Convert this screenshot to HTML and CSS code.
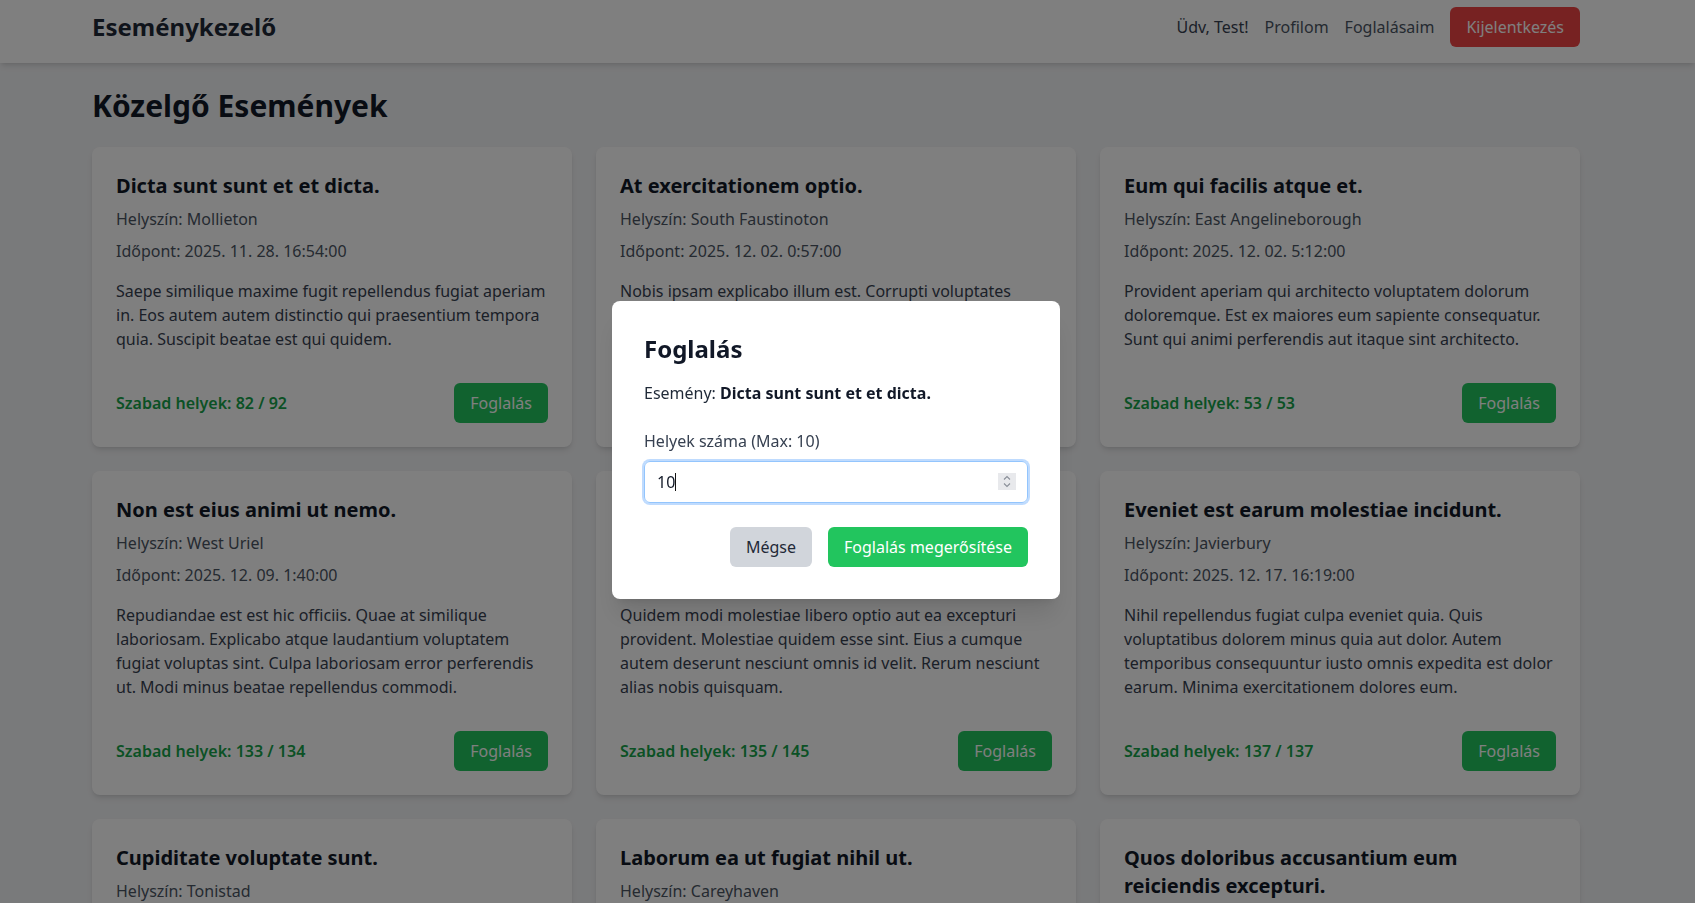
FILE: index.html
```html
<!DOCTYPE html>
<html lang="hu">
<head>
<meta charset="utf-8">
<title>Eseménykezelő</title>
<link rel="stylesheet" href="styles.css">
</head>
<body>
<header class="site-header">
  <div class="container nav">
    <div class="brand">Eseménykezelő</div>
    <nav class="nav-links">
      <span class="greet">Üdv, Test!</span>
      <a class="nav-link" href="#">Profilom</a>
      <a class="nav-link" href="#">Foglalásaim</a>
      <button class="btn btn-red">Kijelentkezés</button>
    </nav>
  </div>
</header>

<main class="container main">
  <h1 class="page-title">Közelgő Események</h1>
  <div class="grid">
    <article class="card">
      <h2 class="card-title">Dicta sunt sunt et et dicta.</h2>
      <p class="meta">Helyszín: Mollieton</p>
      <p class="meta">Időpont: 2025. 11. 28. 16:54:00</p>
      <p class="desc">Saepe similique maxime fugit repellendus fugiat aperiam in. Eos autem autem distinctio qui praesentium tempora quia. Suscipit beatae est qui quidem.</p>
      <div class="card-foot"><span class="seats">Szabad helyek: 82 / 92</span><button class="btn btn-green">Foglalás</button></div>
    </article>
    <article class="card">
      <h2 class="card-title">At exercitationem optio.</h2>
      <p class="meta">Helyszín: South Faustinoton</p>
      <p class="meta">Időpont: 2025. 12. 02. 0:57:00</p>
      <p class="desc">Nobis ipsam explicabo illum est. Corrupti voluptates dolorem quia aut. Et qui sed aliquam voluptas nihil. Ut quam ut ea ipsam.</p>
      <div class="card-foot"><span class="seats">Szabad helyek: 64 / 80</span><button class="btn btn-green">Foglalás</button></div>
    </article>
    <article class="card">
      <h2 class="card-title">Eum qui facilis atque et.</h2>
      <p class="meta">Helyszín: East Angelineborough</p>
      <p class="meta">Időpont: 2025. 12. 02. 5:12:00</p>
      <p class="desc">Provident aperiam qui architecto voluptatem dolorum doloremque. Est ex maiores eum sapiente consequatur. Sunt qui animi perferendis aut itaque sint architecto.</p>
      <div class="card-foot"><span class="seats">Szabad helyek: 53 / 53</span><button class="btn btn-green">Foglalás</button></div>
    </article>

    <article class="card">
      <h2 class="card-title">Non est eius animi ut nemo.</h2>
      <p class="meta">Helyszín: West Uriel</p>
      <p class="meta">Időpont: 2025. 12. 09. 1:40:00</p>
      <p class="desc">Repudiandae est est hic officiis. Quae at similique laboriosam. Explicabo atque laudantium voluptatem fugiat voluptas sint. Culpa laboriosam error perferendis ut. Modi minus beatae repellendus commodi.</p>
      <div class="card-foot"><span class="seats">Szabad helyek: 133 / 134</span><button class="btn btn-green">Foglalás</button></div>
    </article>
    <article class="card">
      <h2 class="card-title">Quia rerum voluptas et.</h2>
      <p class="meta">Helyszín: Lake Kaleyfort</p>
      <p class="meta">Időpont: 2025. 12. 12. 9:25:00</p>
      <p class="desc">Quidem modi molestiae libero optio aut ea excepturi provident. Molestiae quidem esse sint. Eius a cumque autem deserunt nesciunt omnis id velit. Rerum nesciunt alias nobis quisquam.</p>
      <div class="card-foot"><span class="seats">Szabad helyek: 135 / 145</span><button class="btn btn-green">Foglalás</button></div>
    </article>
    <article class="card">
      <h2 class="card-title">Eveniet est earum molestiae incidunt.</h2>
      <p class="meta">Helyszín: Javierbury</p>
      <p class="meta">Időpont: 2025. 12. 17. 16:19:00</p>
      <p class="desc">Nihil repellendus fugiat culpa eveniet quia. Quis voluptatibus dolorem minus quia aut dolor. Autem temporibus consequuntur iusto omnis expedita est dolor earum. Minima exercitationem dolores eum.</p>
      <div class="card-foot"><span class="seats">Szabad helyek: 137 / 137</span><button class="btn btn-green">Foglalás</button></div>
    </article>

    <article class="card">
      <h2 class="card-title">Cupiditate voluptate sunt.</h2>
      <p class="meta">Helyszín: Tonistad</p>
      <p class="meta">Időpont: 2025. 12. 20. 11:05:00</p>
      <p class="desc">Voluptas omnis est quia ut. Dolores dolorem ut illum voluptatem.</p>
      <div class="card-foot"><span class="seats">Szabad helyek: 40 / 50</span><button class="btn btn-green">Foglalás</button></div>
    </article>
    <article class="card">
      <h2 class="card-title">Laborum ea ut fugiat nihil ut.</h2>
      <p class="meta">Helyszín: Careyhaven</p>
      <p class="meta">Időpont: 2025. 12. 22. 14:30:00</p>
      <p class="desc">Sit eum est aut consequatur. Quo dolorem aut ea. Nam omnis rerum ut.</p>
      <div class="card-foot"><span class="seats">Szabad helyek: 77 / 90</span><button class="btn btn-green">Foglalás</button></div>
    </article>
    <article class="card">
      <h2 class="card-title">Quos doloribus accusantium eum reiciendis excepturi.</h2>
      <p class="meta">Helyszín: North Elsa</p>
      <p class="meta">Időpont: 2025. 12. 28. 18:00:00</p>
      <p class="desc">Ut enim accusamus et. Aut quia sed ipsa a corrupti.</p>
      <div class="card-foot"><span class="seats">Szabad helyek: 12 / 20</span><button class="btn btn-green">Foglalás</button></div>
    </article>
  </div>
</main>

<div class="overlay">
  <div class="modal">
    <h3 class="modal-title">Foglalás</h3>
    <p class="modal-event">Esemény: <strong>Dicta sunt sunt et et dicta.</strong></p>
    <label class="field-label">Helyek száma (Max: 10)</label>
    <div class="fake-input">
      <span class="input-value">10</span><span class="caret"></span>
      <svg class="spinner" width="18" height="17" viewBox="0 0 18 17" aria-hidden="true">
        <rect width="18" height="17" fill="#e8e9ec"/>
        <path d="M6 6.5 L9 3.5 L12 6.5" fill="none" stroke="#8a8f98" stroke-width="1.1"/>
        <path d="M6 10.5 L9 13.5 L12 10.5" fill="none" stroke="#8a8f98" stroke-width="1.1"/>
      </svg>
    </div>
    <div class="modal-actions">
      <button class="btn btn-gray">Mégse</button>
      <button class="btn btn-confirm">Foglalás megerősítése</button>
    </div>
  </div>
</div>
</body>
</html>
```

FILE: styles.css
```css
* { box-sizing: border-box; }
html, body { height: 100%; overflow: hidden; }
body {
  margin: 0;
  padding-right: 23px;
  background: #f3f4f6;
  font-family: "Noto Sans", "Open Sans", sans-serif;
  font-size: 16px;
  line-height: 24px;
  color: #1f2937;
}
p, h1, h2, h3 { margin: 0; }
button { font-family: inherit; font-size: 16px; line-height: 24px; border: 0; cursor: pointer; }

.container {
  max-width: 1536px;
  margin: 0 auto;
  padding: 0 24px;
}

.site-header {
  background: #fff;
  box-shadow: 0 4px 6px -1px rgba(0,0,0,.1), 0 2px 4px -2px rgba(0,0,0,.1);
  margin-right: -23px;
  padding: 7px 23px 16px 0;
}
.nav { display: flex; align-items: center; justify-content: space-between; }
.brand { font-size: 24px; line-height: 32px; font-weight: 700; color: #1f2937; }
.nav-links { display: flex; align-items: center; gap: 16px; }
.greet { color: #374151; }
.nav-link { color: #4b5563; text-decoration: none; }

.btn { padding: 8px 16px; border-radius: 6px; color: #fff; }
.btn-red { background: #ef4444; }
.btn-green { background: #22c55e; }
.btn-gray { background: #d1d5db; color: #1f2937; }
.btn-confirm { background: #22c55e; }

.main { padding-top: 25px; }
.page-title { font-size: 30px; line-height: 36px; font-weight: 700; color: #111827; margin-bottom: 23px; }

.grid { display: grid; grid-template-columns: repeat(3, 1fr); gap: 24px; }
.card {
  background: #fff;
  border-radius: 8px;
  box-shadow: 0 4px 6px -1px rgba(0,0,0,.1), 0 2px 4px -2px rgba(0,0,0,.1);
  padding: 24px;
  display: flex;
  flex-direction: column;
}
.card-title { font-size: 20px; line-height: 28px; font-weight: 700; color: #111827; padding-top: 1px; margin-bottom: 7px; }
.meta { color: #4b5563; margin-bottom: 8px; }
.desc { color: #374151; margin-top: 8px; margin-bottom: 16px; }
.card-foot { margin-top: auto; padding-top: 16px; display: flex; align-items: center; justify-content: space-between; }
.seats { color: #16a34a; font-weight: 600; }

.overlay {
  position: fixed;
  inset: 0;
  background: rgba(0,0,0,.5);
  display: flex;
  align-items: center;
  justify-content: center;
  padding-right: 23px;
  padding-bottom: 4px;
}
.modal {
  width: 448px;
  background: #fff;
  border-radius: 8px;
  padding: 32px;
  box-shadow: 0 20px 25px -5px rgba(0,0,0,.1), 0 8px 10px -6px rgba(0,0,0,.1);
}
.modal-title { font-size: 24px; line-height: 32px; font-weight: 700; color: #111827; margin-bottom: 16px; }
.modal-event { color: #1f2937; margin-bottom: 24px; }
.modal-event strong { font-weight: 700; color: #111827; }
.field-label { display: block; color: #374151; margin-bottom: 8px; }
.fake-input {
  height: 42px;
  border: 1px solid #93c5fd;
  border-radius: 6px;
  box-shadow: 0 0 0 2px #bfdbfe;
  padding: 0 11px 0 12px;
  display: flex;
  align-items: center;
  color: #111827;
}
.input-value { line-height: 24px; }
.caret { width: 1px; height: 18px; background: #111; margin-left: 0; }
.spinner { margin-left: auto; }
.modal-actions { margin-top: 24px; display: flex; justify-content: flex-end; gap: 16px; }
```
